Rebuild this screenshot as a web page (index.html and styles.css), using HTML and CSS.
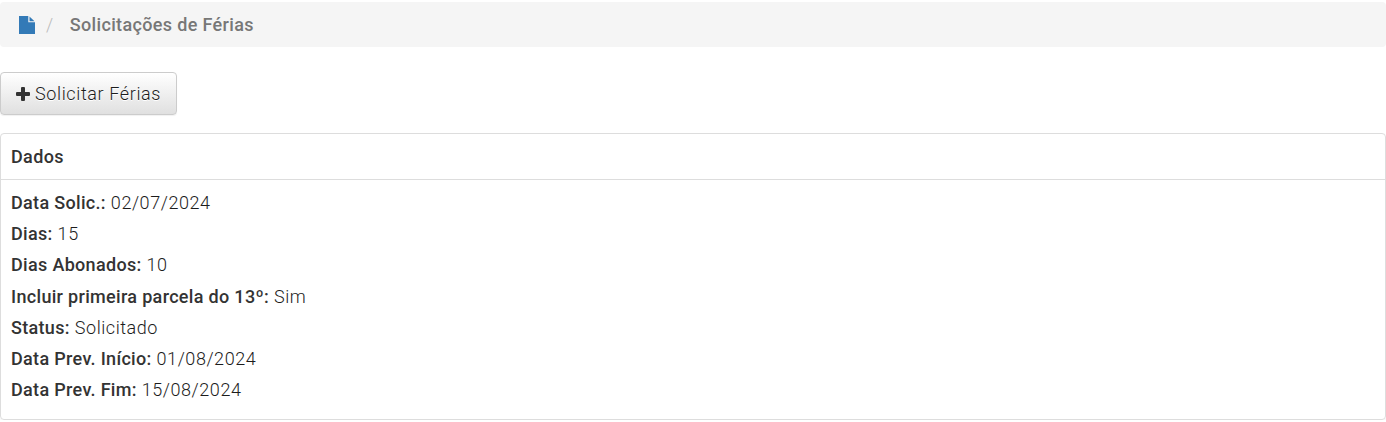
FILE: index.html
```html
<!DOCTYPE html>
<html lang="pt-BR">
<head>
<meta charset="utf-8">
<title>Solicitações de Férias</title>
<link rel="stylesheet" href="styles.css">
</head>
<body>
<nav class="breadcrumb">
<svg class="icon-file" viewBox="0 0 16 18" width="16" height="18"><path d="M0 0h9.3v6.3H16V18H0z"/><path d="M10.5 0.6L15.5 5.2h-5z"/></svg>
<span class="separator">/</span>
<span class="current">Solicitações de Férias</span>
</nav>
<button class="btn" type="button"><svg class="icon-plus" viewBox="0 0 14 14" width="14" height="14"><path d="M6 0h2q1 0 1 1v4h4q1 0 1 1v2q0 1-1 1H9v4q0 1-1 1H6q-1 0-1-1V9H1q-1 0-1-1V6q0-1 1-1h4V1q0-1 1-1z"/></svg><span>Solicitar Férias</span></button>
<section class="panel">
<h2 class="panel-heading">Dados</h2>
<div class="panel-body">
<p class="row"><b>Data Solic.:</b> 02/07/2024</p>
<p class="row"><b>Dias:</b> 15</p>
<p class="row"><b>Dias Abonados:</b> 10</p>
<p class="row"><b>Incluir primeira parcela do 13º:</b> Sim</p>
<p class="row"><b>Status:</b> Solicitado</p>
<p class="row"><b>Data Prev. Início:</b> 01/08/2024</p>
<p class="row"><b>Data Prev. Fim:</b> 15/08/2024</p>
</div>
</section>
</body>
</html>
```
FILE: styles.css
```css
* { box-sizing: border-box; }
body {
  margin: 0;
  padding-top: 2px;
  background: #fff;
  color: #1c1c1c;
  font-family: Roboto, "Liberation Sans", sans-serif;
  font-size: 18px;
  font-weight: 300;
  letter-spacing: 0.55px;
}
b { color: #333; font-weight: 500; letter-spacing: 0.32px; }
.breadcrumb {
  display: flex;
  align-items: center;
  height: 45px;
  padding-left: 19px;
  background: #f5f5f5;
  border-radius: 4px;
}
.icon-file { fill: #337ab7; }
.separator { margin-left: 11px; color: #bbb; }
.current { margin-left: 16px; color: #777; font-weight: 500; letter-spacing: 0.35px; }
.btn {
  display: flex;
  align-items: center;
  gap: 5px;
  width: 177px;
  height: 43px;
  margin: 25px 0 18px;
  padding: 0 15px;
  border: 1px solid #ccc;
  border-radius: 4px;
  background: linear-gradient(#fff, #e0e0e0);
  box-shadow: 0 1px 1px rgba(0, 0, 0, 0.06);
  color: #1c1c1c;
  font: inherit;
  letter-spacing: 0.62px;
  white-space: nowrap;
  text-shadow: 0 1px 0 #fff;
}
.icon-plus { flex: none; fill: #333; }
.panel {
  height: 287px;
  border: 1px solid #ddd;
  border-radius: 4px;
  box-shadow: 0 1px 2px rgba(0, 0, 0, 0.05);
}
.panel-heading {
  height: 46px;
  margin: 0;
  padding-left: 10px;
  border-bottom: 1px solid #ddd;
  color: #333;
  font-size: 18px;
  font-weight: 500;
  letter-spacing: 0.35px;
  line-height: 46px;
}
.panel-body { padding: 7px 10px; }
.row { margin: 0; line-height: 31.2px; }
```
